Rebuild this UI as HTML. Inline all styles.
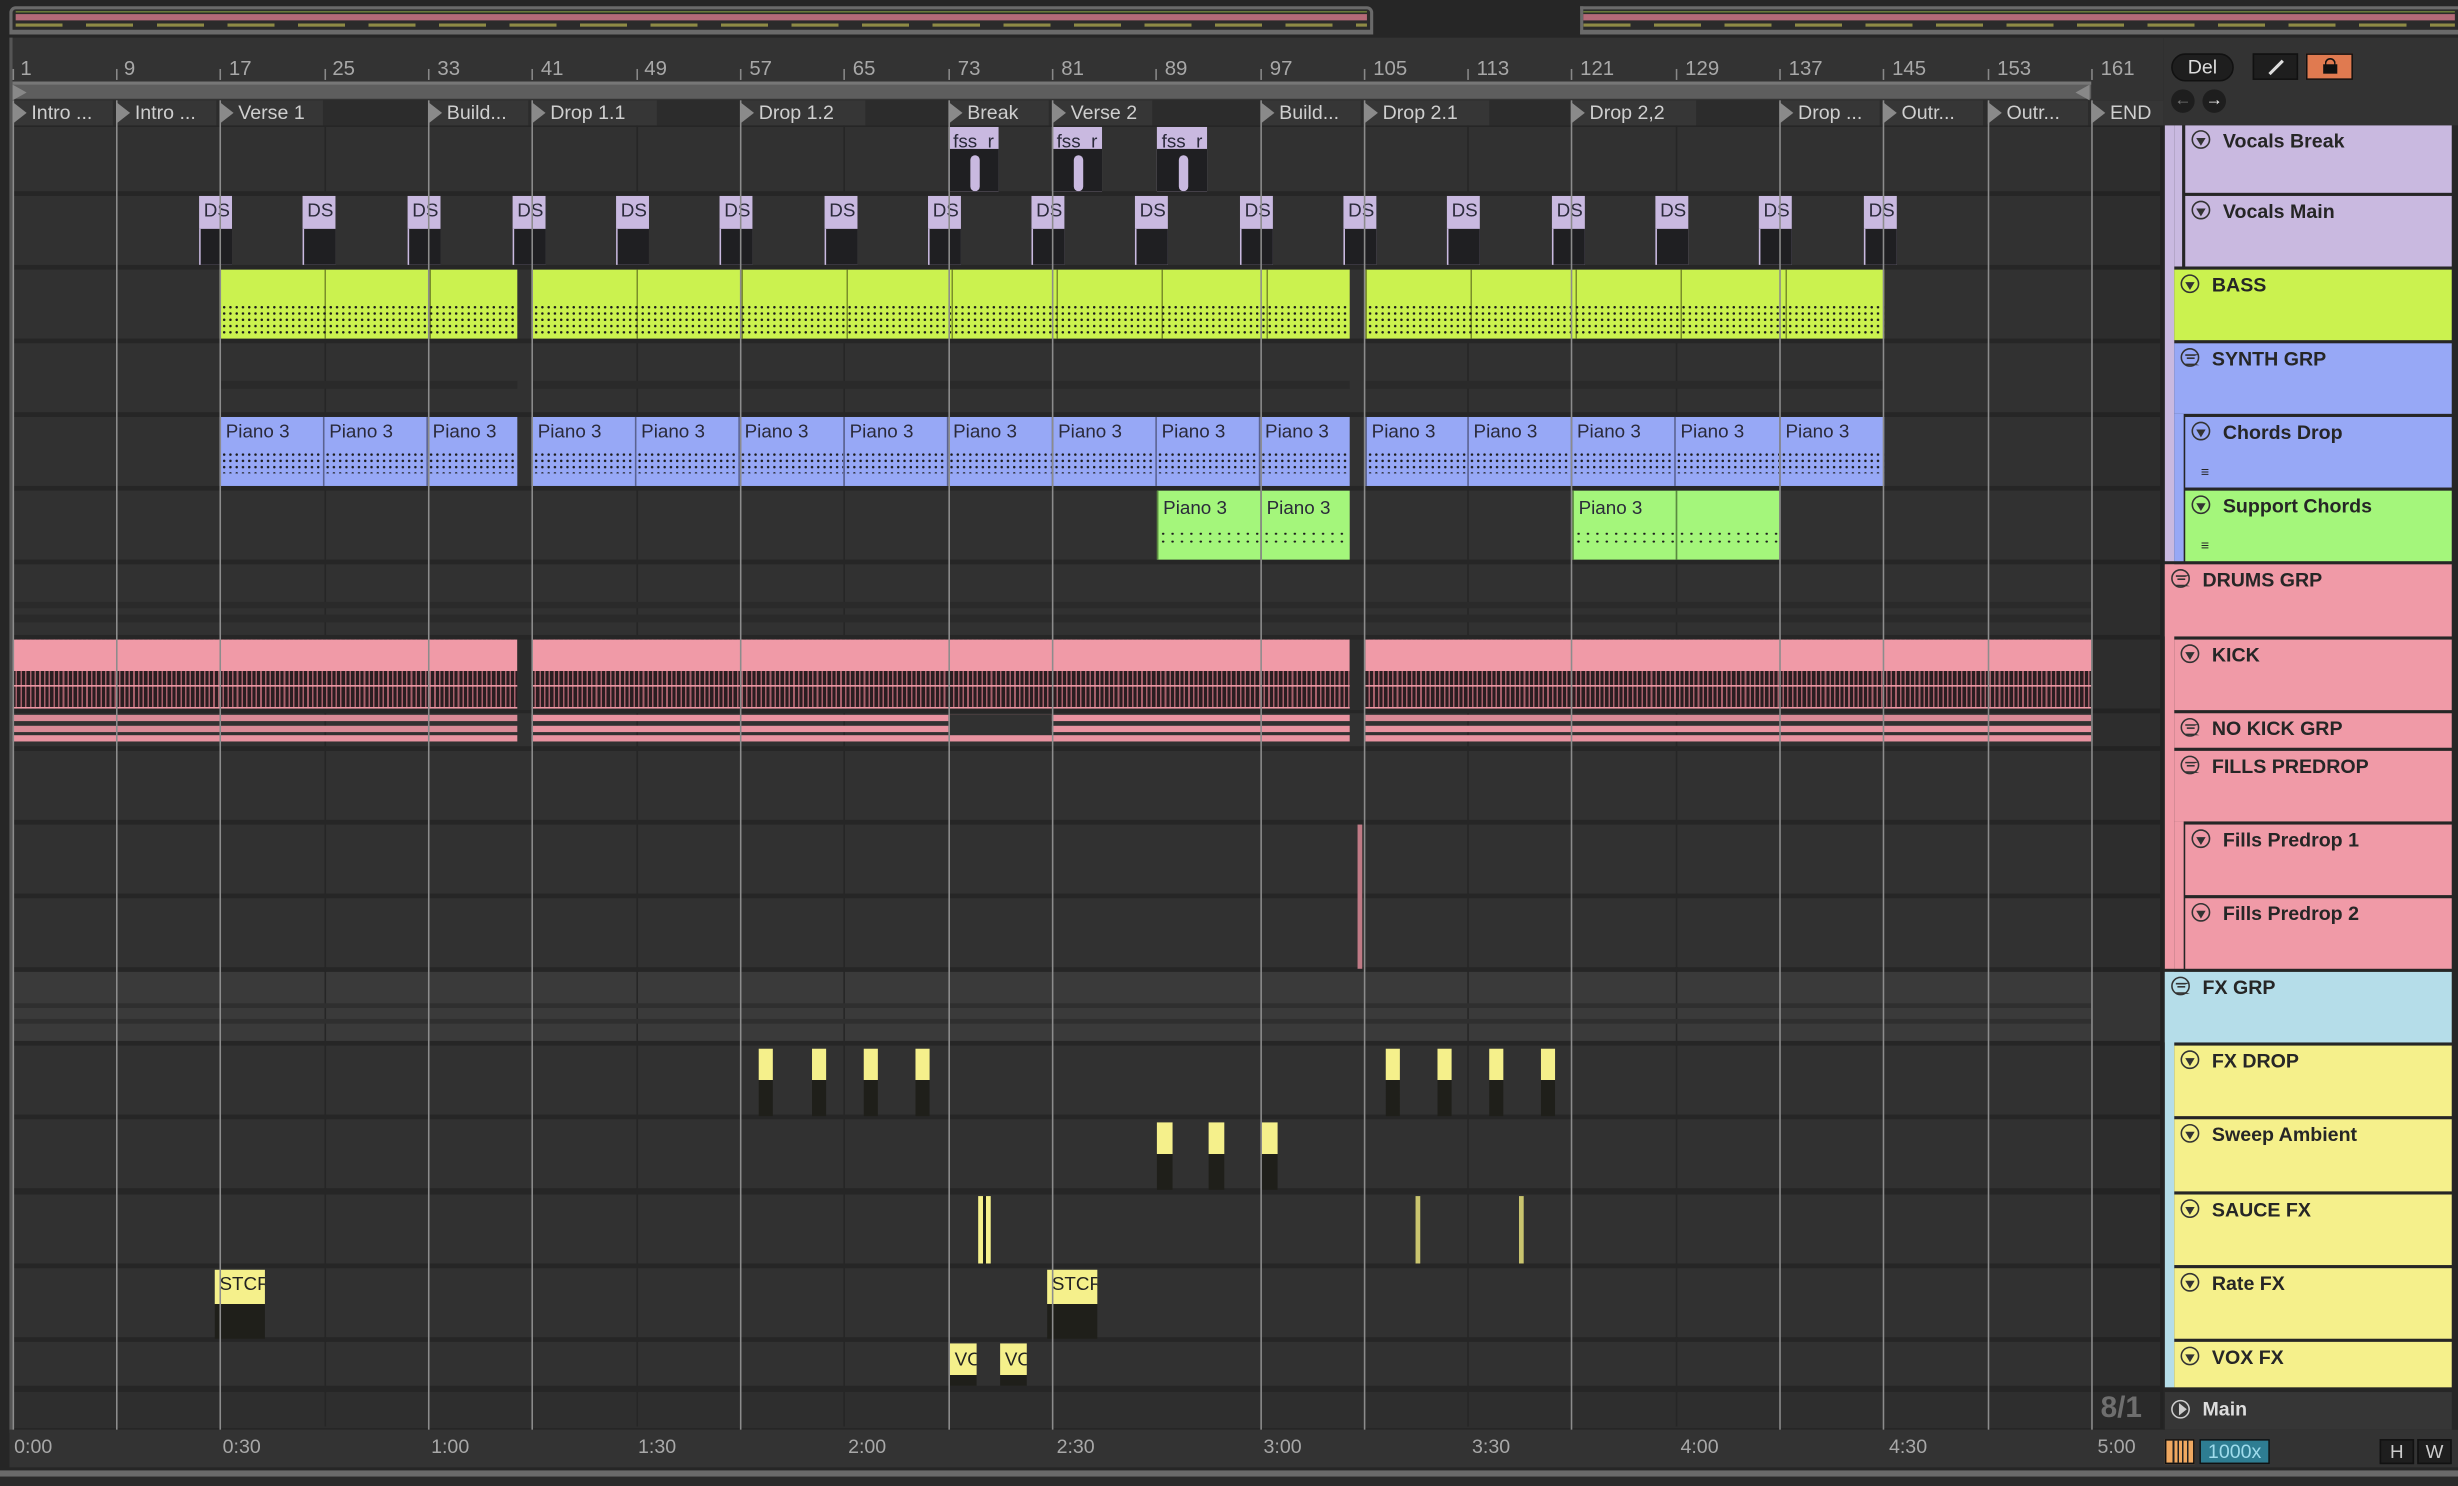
<!DOCTYPE html>
<html><head><meta charset="utf-8"><style>
html,body{margin:0;padding:0;background:#262626;overflow:hidden;width:2458px;height:1486px}
.s{position:absolute;left:0;top:0;width:1568px;height:948px;transform:scale(1.567602);transform-origin:0 0;background:#262626;font-family:"Liberation Sans",sans-serif;overflow:hidden}
.a{position:absolute}
.row{position:absolute;left:8px;width:1370px;background:#313131}
.vl{position:absolute;top:64px;width:1px;height:850px;background:#8c8c8c}
.gl{position:absolute;top:80px;width:1px;height:830px;background:#262626}
.num{position:absolute;top:36px;color:#a8a8a8;font-size:13px}
.tk{position:absolute;top:44px;width:1px;height:7px;background:#888}
.loc{position:absolute;top:64px;height:16px;color:#cfcfcf;font-size:12.5px;line-height:16px;background:#363636;padding-left:12px;box-sizing:border-box;white-space:nowrap;overflow:hidden}
.loc:before{content:"";position:absolute;left:0;top:1px;border-left:9px solid #8a8a8a;border-top:7px solid transparent;border-bottom:7px solid transparent}
.c{position:absolute;overflow:hidden;font-size:12px;line-height:18px;color:#2a2a3a;padding-left:3px;box-sizing:border-box;white-space:nowrap}
.b{background:#cbf24f;border-left:1px solid #7a8f2a}
.p{background:#97a8f6;border-left:1px solid #5a6290}
.g{background:#a4f67b;border-left:1px solid #5a8a40}
.dots{position:absolute;left:0;right:0;background-image:radial-gradient(#1c1c1c 0.7px,transparent 0.9px);background-size:4px 4px}
.h{position:absolute;left:0;width:1568px;font-weight:bold;font-size:12.5px;color:#262626;box-sizing:border-box;padding-left:24px;padding-top:3px}
.ic{position:absolute;left:4px;top:3px;width:12px;height:12px;border:1.3px solid #333;border-radius:50%;box-sizing:border-box}
.ic:after{content:"";position:absolute;left:2.2px;top:3.5px;border-top:5px solid #333;border-left:3px solid transparent;border-right:3px solid transparent}
.ig:after{content:"";position:absolute;left:2px;top:2.5px;width:6px;height:5px;border-top:1.2px solid #333;border-bottom:1.2px solid #333;border-left:none;background:linear-gradient(#333,#333) 1px 1.9px/5px 1.2px no-repeat}
.y{background:#f5f08b}
.k{background:#f09aa7}
.tl{position:absolute;top:916px;color:#a8a8a8;font-size:12.5px}
</style></head><body><div class="s">

<!-- overview -->
<div class="a" style="left:6px;top:4px;width:870px;height:18px;border:2px solid #6a6a6a;border-bottom-width:3px;border-radius:4px 4px 0 0;box-sizing:border-box;background:#2b2b2b"></div>
<div class="a" style="left:1008px;top:4px;width:562px;height:18px;border:2px solid #6a6a6a;border-bottom-width:3px;border-right:none;box-sizing:border-box;background:#2b2b2b"></div>
<div class="a" style="left:10px;top:9px;width:862px;height:4px;background:#b46a78"></div>
<div class="a" style="left:1010px;top:9px;width:556px;height:4px;background:#b46a78"></div>
<div class="a" style="left:10px;top:15px;width:862px;height:2px;background:repeating-linear-gradient(90deg,#8e8a45 0 30px,transparent 30px 45px)"></div>
<div class="a" style="left:1010px;top:15px;width:556px;height:2px;background:repeating-linear-gradient(90deg,#8e8a45 0 30px,transparent 30px 45px)"></div>
<div class="a" style="left:10px;top:7px;width:862px;height:1px;background:#6a7a3a"></div>
<div class="a" style="left:1010px;top:7px;width:556px;height:1px;background:#6a7a3a"></div>

<!-- ruler bg -->
<div class="a" style="left:6px;top:24px;width:1374px;height:40px;background:#333"></div>
<div class="a" style="left:8px;top:52px;width:1326px;height:11px;background:#5e5e5e;border-top:2px solid #777;box-sizing:border-box"></div>
<div class="a" style="left:1324px;top:54px;border-right:9px solid #888;border-top:5px solid transparent;border-bottom:5px solid transparent"></div>
<div class="a" style="left:8px;top:54px;border-left:9px solid #888;border-top:5px solid transparent;border-bottom:5px solid transparent"></div>
<div class="a" style="left:6px;top:24px;width:2px;height:890px;background:#555"></div>

<div class="tk" style="left:8px"></div><div class="num" style="left:13px">1</div>
<div class="tk" style="left:74px"></div><div class="num" style="left:79px">9</div>
<div class="tk" style="left:140px"></div><div class="num" style="left:146px">17</div>
<div class="tk" style="left:207px"></div><div class="num" style="left:212px">25</div>
<div class="tk" style="left:273px"></div><div class="num" style="left:279px">33</div>
<div class="tk" style="left:339px"></div><div class="num" style="left:345px">41</div>
<div class="tk" style="left:406px"></div><div class="num" style="left:411px">49</div>
<div class="tk" style="left:472px"></div><div class="num" style="left:478px">57</div>
<div class="tk" style="left:538px"></div><div class="num" style="left:544px">65</div>
<div class="tk" style="left:605px"></div><div class="num" style="left:611px">73</div>
<div class="tk" style="left:671px"></div><div class="num" style="left:677px">81</div>
<div class="tk" style="left:737px"></div><div class="num" style="left:743px">89</div>
<div class="tk" style="left:804px"></div><div class="num" style="left:810px">97</div>
<div class="tk" style="left:870px"></div><div class="num" style="left:876px">105</div>
<div class="tk" style="left:936px"></div><div class="num" style="left:942px">113</div>
<div class="tk" style="left:1002px"></div><div class="num" style="left:1008px">121</div>
<div class="tk" style="left:1069px"></div><div class="num" style="left:1075px">129</div>
<div class="tk" style="left:1135px"></div><div class="num" style="left:1141px">137</div>
<div class="tk" style="left:1201px"></div><div class="num" style="left:1207px">145</div>
<div class="tk" style="left:1268px"></div><div class="num" style="left:1274px">153</div>
<div class="tk" style="left:1334px"></div><div class="num" style="left:1340px">161</div>

<!-- locators row -->
<div class="a" style="left:8px;top:64px;width:1372px;height:16px;background:#2c2c2c"></div>
<div class="loc" style="left:8px;width:64px">Intro ...</div>
<div class="loc" style="left:74px;width:64px">Intro ...</div>
<div class="loc" style="left:140px;width:66px">Verse 1</div>
<div class="loc" style="left:273px;width:64px">Build...</div>
<div class="loc" style="left:339px;width:80px">Drop 1.1</div>
<div class="loc" style="left:472px;width:80px">Drop 1.2</div>
<div class="loc" style="left:605px;width:64px">Break</div>
<div class="loc" style="left:671px;width:64px">Verse 2</div>
<div class="loc" style="left:804px;width:64px">Build...</div>
<div class="loc" style="left:870px;width:80px">Drop 2.1</div>
<div class="loc" style="left:1002px;width:80px">Drop 2,2</div>
<div class="loc" style="left:1135px;width:64px">Drop ...</div>
<div class="loc" style="left:1201px;width:64px">Outr...</div>
<div class="loc" style="left:1268px;width:64px">Outr...</div>
<div class="loc" style="left:1334px;width:46px">END</div>

<!-- rows -->
<div class="row" style="top:81px;height:41px"></div>
<div class="row" style="top:125px;height:44px"></div>
<div class="row" style="top:172px;height:44px"></div>
<div class="row" style="top:219px;height:44px"></div>
<div class="row" style="top:266px;height:44px"></div>
<div class="row" style="top:313px;height:44px"></div>
<div class="row" style="top:360px;height:45px"></div>
<div class="row" style="top:408px;height:44px"></div>
<div class="row" style="top:455px;height:21px"></div>
<div class="row" style="top:479px;height:44px"></div>
<div class="row" style="top:526px;height:44px"></div>
<div class="row" style="top:573px;height:44px"></div>
<div class="row" style="top:620px;height:44px;background:#3a3a3a"></div>
<div class="row" style="top:667px;height:44px"></div>
<div class="row" style="top:714px;height:44px"></div>
<div class="row" style="top:762px;height:44px"></div>
<div class="row" style="top:809px;height:44px"></div>
<div class="row" style="top:856px;height:28px"></div>
<div class="row" style="top:888px;height:23px;background:#2e2e2e"></div>
<div class="a" style="left:1334px;top:80px;width:46px;height:832px;background:rgba(0,0,0,0.07)"></div>

<!-- grid lines -->
<div class="gl" style="left:207px"></div><div class="gl" style="left:406px"></div><div class="gl" style="left:538px"></div><div class="gl" style="left:936px"></div><div class="gl" style="left:1069px"></div>

<!-- group summary stripes -->
<div class="a" style="left:140px;top:243px;width:190px;height:5px;background:#2a2a2a"></div>
<div class="a" style="left:339px;top:243px;width:522px;height:5px;background:#2a2a2a"></div>
<div class="a" style="left:871px;top:243px;width:331px;height:5px;background:#2a2a2a"></div>
<div class="a" style="left:8px;top:384px;width:1326px;height:4px;background:#2a2a2a"></div>
<div class="a" style="left:8px;top:392px;width:1326px;height:5px;background:#2a2a2a"></div>
<div class="a" style="left:8px;top:640px;width:1326px;height:3px;background:#2f2f2f"></div>
<div class="a" style="left:8px;top:650px;width:1326px;height:3px;background:#2f2f2f"></div>

<!-- vocals break -->
<div class="c" style="left:605px;top:81px;width:32px;height:41px;background:#c9b9e0">fss_r<div class="a" style="left:0;top:14px;width:32px;height:27px;background:#1f1f22"></div><div class="a" style="left:14px;top:18px;width:6px;height:23px;background:#c9b9e0;border-radius:3px"></div></div>
<div class="c" style="left:671px;top:81px;width:32px;height:41px;background:#c9b9e0">fss_r<div class="a" style="left:0;top:14px;width:32px;height:27px;background:#1f1f22"></div><div class="a" style="left:14px;top:18px;width:6px;height:23px;background:#c9b9e0;border-radius:3px"></div></div>
<div class="c" style="left:738px;top:81px;width:32px;height:41px;background:#c9b9e0">fss_r<div class="a" style="left:0;top:14px;width:32px;height:27px;background:#1f1f22"></div><div class="a" style="left:14px;top:18px;width:6px;height:23px;background:#c9b9e0;border-radius:3px"></div></div>

<!-- vocals main DS -->
<div class="c" style="left:127px;top:125px;width:21px;height:44px;background:#c9b9e0">DS<div class="a" style="left:0;top:21px;width:21px;height:23px;background:#1f1f22;border-left:1px solid #c9b9e0"></div></div>
<div class="c" style="left:193px;top:125px;width:21px;height:44px;background:#c9b9e0">DS<div class="a" style="left:0;top:21px;width:21px;height:23px;background:#1f1f22;border-left:1px solid #c9b9e0"></div></div>
<div class="c" style="left:260px;top:125px;width:21px;height:44px;background:#c9b9e0">DS<div class="a" style="left:0;top:21px;width:21px;height:23px;background:#1f1f22;border-left:1px solid #c9b9e0"></div></div>
<div class="c" style="left:327px;top:125px;width:21px;height:44px;background:#c9b9e0">DS<div class="a" style="left:0;top:21px;width:21px;height:23px;background:#1f1f22;border-left:1px solid #c9b9e0"></div></div>
<div class="c" style="left:393px;top:125px;width:21px;height:44px;background:#c9b9e0">DS<div class="a" style="left:0;top:21px;width:21px;height:23px;background:#1f1f22;border-left:1px solid #c9b9e0"></div></div>
<div class="c" style="left:459px;top:125px;width:21px;height:44px;background:#c9b9e0">DS<div class="a" style="left:0;top:21px;width:21px;height:23px;background:#1f1f22;border-left:1px solid #c9b9e0"></div></div>
<div class="c" style="left:526px;top:125px;width:21px;height:44px;background:#c9b9e0">DS<div class="a" style="left:0;top:21px;width:21px;height:23px;background:#1f1f22;border-left:1px solid #c9b9e0"></div></div>
<div class="c" style="left:592px;top:125px;width:21px;height:44px;background:#c9b9e0">DS<div class="a" style="left:0;top:21px;width:21px;height:23px;background:#1f1f22;border-left:1px solid #c9b9e0"></div></div>
<div class="c" style="left:658px;top:125px;width:21px;height:44px;background:#c9b9e0">DS<div class="a" style="left:0;top:21px;width:21px;height:23px;background:#1f1f22;border-left:1px solid #c9b9e0"></div></div>
<div class="c" style="left:724px;top:125px;width:21px;height:44px;background:#c9b9e0">DS<div class="a" style="left:0;top:21px;width:21px;height:23px;background:#1f1f22;border-left:1px solid #c9b9e0"></div></div>
<div class="c" style="left:791px;top:125px;width:21px;height:44px;background:#c9b9e0">DS<div class="a" style="left:0;top:21px;width:21px;height:23px;background:#1f1f22;border-left:1px solid #c9b9e0"></div></div>
<div class="c" style="left:857px;top:125px;width:21px;height:44px;background:#c9b9e0">DS<div class="a" style="left:0;top:21px;width:21px;height:23px;background:#1f1f22;border-left:1px solid #c9b9e0"></div></div>
<div class="c" style="left:923px;top:125px;width:21px;height:44px;background:#c9b9e0">DS<div class="a" style="left:0;top:21px;width:21px;height:23px;background:#1f1f22;border-left:1px solid #c9b9e0"></div></div>
<div class="c" style="left:990px;top:125px;width:21px;height:44px;background:#c9b9e0">DS<div class="a" style="left:0;top:21px;width:21px;height:23px;background:#1f1f22;border-left:1px solid #c9b9e0"></div></div>
<div class="c" style="left:1056px;top:125px;width:21px;height:44px;background:#c9b9e0">DS<div class="a" style="left:0;top:21px;width:21px;height:23px;background:#1f1f22;border-left:1px solid #c9b9e0"></div></div>
<div class="c" style="left:1122px;top:125px;width:21px;height:44px;background:#c9b9e0">DS<div class="a" style="left:0;top:21px;width:21px;height:23px;background:#1f1f22;border-left:1px solid #c9b9e0"></div></div>
<div class="c" style="left:1189px;top:125px;width:21px;height:44px;background:#c9b9e0">DS<div class="a" style="left:0;top:21px;width:21px;height:23px;background:#1f1f22;border-left:1px solid #c9b9e0"></div></div>

<!-- bass -->
<div class="c b" style="left:140px;top:172px;width:190px;height:44px;background:#cbf24f repeating-linear-gradient(90deg,transparent 0 66px,#7a8f2a 66px 67px)"><div class="dots" style="top:22px;height:20px"></div></div>
<div class="c b" style="left:339px;top:172px;width:522px;height:44px;background:#cbf24f repeating-linear-gradient(90deg,transparent 0 66px,#7a8f2a 66px 67px)"><div class="dots" style="top:22px;height:20px"></div></div>
<div class="c b" style="left:871px;top:172px;width:331px;height:44px;background:#cbf24f repeating-linear-gradient(90deg,transparent 0 66px,#7a8f2a 66px 67px)"><div class="dots" style="top:22px;height:20px"></div></div>

<!-- chords drop -->
<div class="c p" style="left:140px;top:266px;width:67px;height:44px">Piano 3<div class="dots" style="top:22px;height:14px"></div></div>
<div class="c p" style="left:206px;top:266px;width:67px;height:44px">Piano 3<div class="dots" style="top:22px;height:14px"></div></div>
<div class="c p" style="left:272px;top:266px;width:58px;height:44px">Piano 3<div class="dots" style="top:22px;height:14px"></div></div>
<div class="c p" style="left:339px;top:266px;width:67px;height:44px">Piano 3<div class="dots" style="top:22px;height:14px"></div></div>
<div class="c p" style="left:405px;top:266px;width:67px;height:44px">Piano 3<div class="dots" style="top:22px;height:14px"></div></div>
<div class="c p" style="left:471px;top:266px;width:67px;height:44px">Piano 3<div class="dots" style="top:22px;height:14px"></div></div>
<div class="c p" style="left:538px;top:266px;width:67px;height:44px">Piano 3<div class="dots" style="top:22px;height:14px"></div></div>
<div class="c p" style="left:604px;top:266px;width:67px;height:44px">Piano 3<div class="dots" style="top:22px;height:14px"></div></div>
<div class="c p" style="left:671px;top:266px;width:67px;height:44px">Piano 3<div class="dots" style="top:22px;height:14px"></div></div>
<div class="c p" style="left:737px;top:266px;width:67px;height:44px">Piano 3<div class="dots" style="top:22px;height:14px"></div></div>
<div class="c p" style="left:803px;top:266px;width:58px;height:44px">Piano 3<div class="dots" style="top:22px;height:14px"></div></div>
<div class="c p" style="left:871px;top:266px;width:66px;height:44px">Piano 3<div class="dots" style="top:22px;height:14px"></div></div>
<div class="c p" style="left:936px;top:266px;width:67px;height:44px">Piano 3<div class="dots" style="top:22px;height:14px"></div></div>
<div class="c p" style="left:1002px;top:266px;width:67px;height:44px">Piano 3<div class="dots" style="top:22px;height:14px"></div></div>
<div class="c p" style="left:1068px;top:266px;width:67px;height:44px">Piano 3<div class="dots" style="top:22px;height:14px"></div></div>
<div class="c p" style="left:1135px;top:266px;width:67px;height:44px">Piano 3<div class="dots" style="top:22px;height:14px"></div></div>

<!-- support chords -->
<div class="c g" style="left:738px;top:313px;width:66px;height:44px;padding-top:2px">Piano 3<div class="dots" style="top:25px;height:10px;background-size:6px 5px"></div></div>
<div class="c g" style="left:804px;top:313px;width:57px;height:44px;padding-top:2px">Piano 3<div class="dots" style="top:25px;height:10px;background-size:6px 5px"></div></div>
<div class="c g" style="left:1003px;top:313px;width:66px;height:44px;padding-top:2px">Piano 3<div class="dots" style="top:25px;height:10px;background-size:6px 5px"></div></div>
<div class="c g" style="left:1069px;top:313px;width:66px;height:44px"><div class="dots" style="top:25px;height:10px;background-size:6px 5px"></div></div>

<!-- kick -->
<div class="a k" style="left:8px;top:408px;width:322px;height:44px;background:linear-gradient(#f09aa7 0 20px,transparent 20px),repeating-linear-gradient(90deg,#2a1d20 0 2px,#a7606b 2px 3px)"></div>
<div class="a k" style="left:339px;top:408px;width:522px;height:44px;background:linear-gradient(#f09aa7 0 20px,transparent 20px),repeating-linear-gradient(90deg,#2a1d20 0 2px,#a7606b 2px 3px)"></div>
<div class="a k" style="left:871px;top:408px;width:463px;height:44px;background:linear-gradient(#f09aa7 0 20px,transparent 20px),repeating-linear-gradient(90deg,#2a1d20 0 2px,#a7606b 2px 3px)"></div>
<div class="a" style="left:8px;top:437px;width:1326px;height:1px;background:#f09aa7"></div>
<div class="a" style="left:8px;top:451px;width:1326px;height:1px;background:#f09aa7"></div>
<div class="a" style="left:330px;top:408px;width:9px;height:45px;background:#2c2c2c"></div>
<div class="a" style="left:861px;top:408px;width:10px;height:45px;background:#2c2c2c"></div>

<!-- no kick -->
<div class="a" style="left:8px;top:456px;width:322px;height:4px;background:#d88a96"></div>
<div class="a" style="left:8px;top:463px;width:322px;height:4px;background:#d88a96"></div>
<div class="a" style="left:8px;top:469px;width:322px;height:4px;background:#e893a0"></div>
<div class="a" style="left:339px;top:456px;width:522px;height:4px;background:#e893a0"></div>
<div class="a" style="left:339px;top:463px;width:522px;height:4px;background:#e893a0"></div>
<div class="a" style="left:339px;top:469px;width:522px;height:4px;background:#e893a0"></div>
<div class="a" style="left:605px;top:456px;width:66px;height:12px;background:#313131"></div>
<div class="a" style="left:871px;top:456px;width:463px;height:4px;background:#d88a96"></div>
<div class="a" style="left:871px;top:463px;width:463px;height:4px;background:#e893a0"></div>
<div class="a" style="left:871px;top:469px;width:463px;height:4px;background:#e893a0"></div>

<!-- fills -->
<div class="a" style="left:866px;top:526px;width:3px;height:92px;background:#c07a85"></div>

<!-- fx drop -->
<div class="a y" style="left:484px;top:669px;width:9px;height:43px;background:linear-gradient(#f5f08b 0 20px,#1f1f1a 20px)"></div>
<div class="a y" style="left:518px;top:669px;width:9px;height:43px;background:linear-gradient(#f5f08b 0 20px,#1f1f1a 20px)"></div>
<div class="a y" style="left:551px;top:669px;width:9px;height:43px;background:linear-gradient(#f5f08b 0 20px,#1f1f1a 20px)"></div>
<div class="a y" style="left:584px;top:669px;width:9px;height:43px;background:linear-gradient(#f5f08b 0 20px,#1f1f1a 20px)"></div>
<div class="a y" style="left:884px;top:669px;width:9px;height:43px;background:linear-gradient(#f5f08b 0 20px,#1f1f1a 20px)"></div>
<div class="a y" style="left:917px;top:669px;width:9px;height:43px;background:linear-gradient(#f5f08b 0 20px,#1f1f1a 20px)"></div>
<div class="a y" style="left:950px;top:669px;width:9px;height:43px;background:linear-gradient(#f5f08b 0 20px,#1f1f1a 20px)"></div>
<div class="a y" style="left:983px;top:669px;width:9px;height:43px;background:linear-gradient(#f5f08b 0 20px,#1f1f1a 20px)"></div>
<!-- sweep -->
<div class="a" style="left:738px;top:716px;width:10px;height:43px;background:linear-gradient(#f5f08b 0 20px,#1f1f1a 20px)"></div>
<div class="a" style="left:771px;top:716px;width:10px;height:43px;background:linear-gradient(#f5f08b 0 20px,#1f1f1a 20px)"></div>
<div class="a" style="left:805px;top:716px;width:10px;height:43px;background:linear-gradient(#f5f08b 0 20px,#1f1f1a 20px)"></div>
<!-- sauce -->
<div class="a" style="left:624px;top:763px;width:8px;height:43px;background:linear-gradient(90deg,#f5f08b 0 3px,#1f1f1a 3px 5px,#f5f08b 5px)"></div>
<div class="a" style="left:903px;top:763px;width:3px;height:43px;background:#c9c46e"></div>
<div class="a" style="left:969px;top:763px;width:3px;height:43px;background:#c9c46e"></div>
<!-- rate -->
<div class="c" style="left:137px;top:810px;width:32px;height:44px;background:linear-gradient(#f5f08b 0 22px,#1f1f1a 22px);color:#222">STCR</div>
<div class="c" style="left:668px;top:810px;width:32px;height:44px;background:linear-gradient(#f5f08b 0 22px,#1f1f1a 22px);color:#222">STCR</div>
<!-- vox -->
<div class="c" style="left:606px;top:857px;width:17px;height:27px;background:linear-gradient(#f5f08b 0 20px,#1f1f1a 20px);color:#222;padding-top:1px">VO</div>
<div class="c" style="left:638px;top:857px;width:17px;height:27px;background:linear-gradient(#f5f08b 0 20px,#1f1f1a 20px);color:#222;padding-top:1px">VO</div>

<!-- locator vertical lines -->
<div class="vl" style="left:8px"></div><div class="vl" style="left:74px"></div><div class="vl" style="left:140px"></div><div class="vl" style="left:273px"></div><div class="vl" style="left:339px"></div><div class="vl" style="left:472px"></div><div class="vl" style="left:605px"></div><div class="vl" style="left:671px"></div><div class="vl" style="left:804px"></div><div class="vl" style="left:870px"></div><div class="vl" style="left:1002px"></div><div class="vl" style="left:1135px"></div><div class="vl" style="left:1201px"></div><div class="vl" style="left:1268px"></div><div class="vl" style="left:1334px"></div>

<div class="a" style="left:1340px;top:888px;color:#6e6e6e;font-size:19px;font-weight:bold">8/1</div>

<!-- bottom time ruler -->
<div class="a" style="left:6px;top:912px;width:1562px;height:24px;background:#333"></div>
<div class="tl" style="left:9px">0:00</div><div class="tl" style="left:142px">0:30</div><div class="tl" style="left:275px">1:00</div><div class="tl" style="left:407px">1:30</div><div class="tl" style="left:541px">2:00</div><div class="tl" style="left:674px">2:30</div><div class="tl" style="left:806px">3:00</div><div class="tl" style="left:939px">3:30</div><div class="tl" style="left:1072px">4:00</div><div class="tl" style="left:1205px">4:30</div><div class="tl" style="left:1338px">5:00</div>
<div class="a" style="left:0;top:938px;width:1568px;height:4px;background:#6a6a6a"></div>
<div class="a" style="left:0;top:942px;width:1568px;height:6px;background:#2a2a2a"></div>

<!-- right panel header -->
<div class="a" style="left:1380px;top:24px;width:188px;height:56px;background:#333"></div>
<div class="a" style="left:1385px;top:34px;width:38px;height:16px;border-radius:9px;background:#1e1e1e;border:1px solid #111;color:#ddd;font-size:12.5px;text-align:center;line-height:16px">Del</div>
<div class="a" style="left:1437px;top:34px;width:27px;height:15px;background:#1e1e1e;border:1px solid #111"><div class="a" style="left:8px;top:7px;width:12px;height:2px;background:#ddd;transform:rotate(-45deg)"></div></div>
<div class="a" style="left:1471px;top:34px;width:28px;height:15px;background:#e07a50;border:1px solid #111"><div class="a" style="left:10px;top:6px;width:9px;height:6px;background:#111"></div><div class="a" style="left:11px;top:2px;width:5px;height:5px;border:1.3px solid #111;border-bottom:none;border-radius:4px 4px 0 0"></div></div>
<div class="a" style="left:1385px;top:57px;width:15px;height:15px;border-radius:50%;background:#1e1e1e;color:#777;font-size:11px;line-height:15px;text-align:center;font-weight:bold">&#8592;</div>
<div class="a" style="left:1405px;top:57px;width:15px;height:15px;border-radius:50%;background:#1e1e1e;color:#eee;font-size:11px;line-height:15px;text-align:center;font-weight:bold">&#8594;</div>

<!-- right panel track headers -->
<div class="a" style="left:1380px;top:80px;width:188px;height:832px;background:#262626"></div>
<div class="a" style="left:1381px;top:80px;width:6px;height:278px;background:#c9b9e0"></div>
<div class="a" style="left:1387px;top:80px;width:5px;height:90px;background:#c9b9e0"></div>
<div class="h" style="left:1394px;top:80px;width:170px;height:43px;background:#c9b9e0"><span class="ic"></span>Vocals Break</div>
<div class="h" style="left:1394px;top:125px;width:170px;height:45px;background:#c9b9e0"><span class="ic"></span>Vocals Main</div>
<div class="h" style="left:1387px;top:172px;width:177px;height:45px;background:#cbf24f"><span class="ic"></span>BASS</div>
<div class="h" style="left:1387px;top:219px;width:177px;height:45px;background:#97a8f6"><span class="ic ig"></span>SYNTH GRP</div>
<div class="a" style="left:1387px;top:264px;width:6px;height:94px;background:#97a8f6"></div>
<div class="h" style="left:1394px;top:266px;width:170px;height:45px;background:#97a8f6"><span class="ic"></span>Chords Drop<div class="a" style="left:10px;top:30px;font-size:9px">&#8801;</div></div>
<div class="h" style="left:1394px;top:313px;width:170px;height:45px;background:#a4f67b"><span class="ic"></span>Support Chords<div class="a" style="left:10px;top:30px;font-size:9px">&#8801;</div></div>
<div class="a" style="left:1381px;top:360px;width:6px;height:258px;background:#f09aa7"></div>
<div class="h" style="left:1381px;top:360px;width:183px;height:46px;background:#f09aa7"><span class="ic ig"></span>DRUMS GRP</div>
<div class="h" style="left:1387px;top:408px;width:177px;height:45px;background:#f09aa7"><span class="ic"></span>KICK</div>
<div class="h" style="left:1387px;top:455px;width:177px;height:22px;background:#f09aa7"><span class="ic ig"></span>NO KICK GRP</div>
<div class="h" style="left:1387px;top:479px;width:177px;height:45px;background:#f09aa7"><span class="ic ig"></span>FILLS PREDROP</div>
<div class="a" style="left:1387px;top:524px;width:6px;height:94px;background:#f09aa7"></div>
<div class="h" style="left:1394px;top:526px;width:170px;height:45px;background:#f09aa7"><span class="ic"></span>Fills Predrop 1</div>
<div class="h" style="left:1394px;top:573px;width:170px;height:45px;background:#f09aa7"><span class="ic"></span>Fills Predrop 2</div>
<div class="a" style="left:1381px;top:620px;width:6px;height:265px;background:#b5dde9"></div>
<div class="h" style="left:1381px;top:620px;width:183px;height:45px;background:#b5dde9"><span class="ic ig"></span>FX GRP</div>
<div class="h" style="left:1387px;top:667px;width:177px;height:45px;background:#f5f08b"><span class="ic"></span>FX DROP</div>
<div class="h" style="left:1387px;top:714px;width:177px;height:46px;background:#f5f08b"><span class="ic"></span>Sweep Ambient</div>
<div class="h" style="left:1387px;top:762px;width:177px;height:45px;background:#f5f08b"><span class="ic"></span>SAUCE FX</div>
<div class="h" style="left:1387px;top:809px;width:177px;height:45px;background:#f5f08b"><span class="ic"></span>Rate FX</div>
<div class="h" style="left:1387px;top:856px;width:177px;height:29px;background:#f5f08b"><span class="ic"></span>VOX FX</div>
<div class="h" style="left:1381px;top:888px;width:183px;height:24px;background:#363636;color:#ddd;padding-top:4px"><span class="ic" style="border-color:#ccc;top:5px"></span>Main</div>
<div class="a" style="left:1386px;top:893px;width:0;height:0;border-left:5px solid #ccc;border-top:4px solid transparent;border-bottom:4px solid transparent;margin-left:4px;margin-top:2px"></div>

<!-- bottom right controls -->
<div class="a" style="left:1381px;top:918px;width:19px;height:16px;background:#f0a860;border:1px solid #111;box-sizing:border-box;background-image:linear-gradient(90deg,transparent 4px,#222 4px 5px,transparent 5px 7px,#222 7px 8px,transparent 8px 10px,#222 10px 11px,transparent 11px 13px,#222 13px 14px,transparent 14px)"></div>
<div class="a" style="left:1403px;top:918px;width:45px;height:16px;background:#2e7d92;border:1px solid #111;box-sizing:border-box;color:#9fdcec;font-size:12.5px;line-height:14px;text-align:center">1000x</div>
<div class="a" style="left:1518px;top:918px;width:22px;height:16px;background:#1e1e1e;border:1px solid #111;box-sizing:border-box;color:#ccc;font-size:12px;line-height:14px;text-align:center">H</div>
<div class="a" style="left:1542px;top:918px;width:22px;height:16px;background:#1e1e1e;border:1px solid #111;box-sizing:border-box;color:#ccc;font-size:12px;line-height:14px;text-align:center">W</div>

</div></body></html>
